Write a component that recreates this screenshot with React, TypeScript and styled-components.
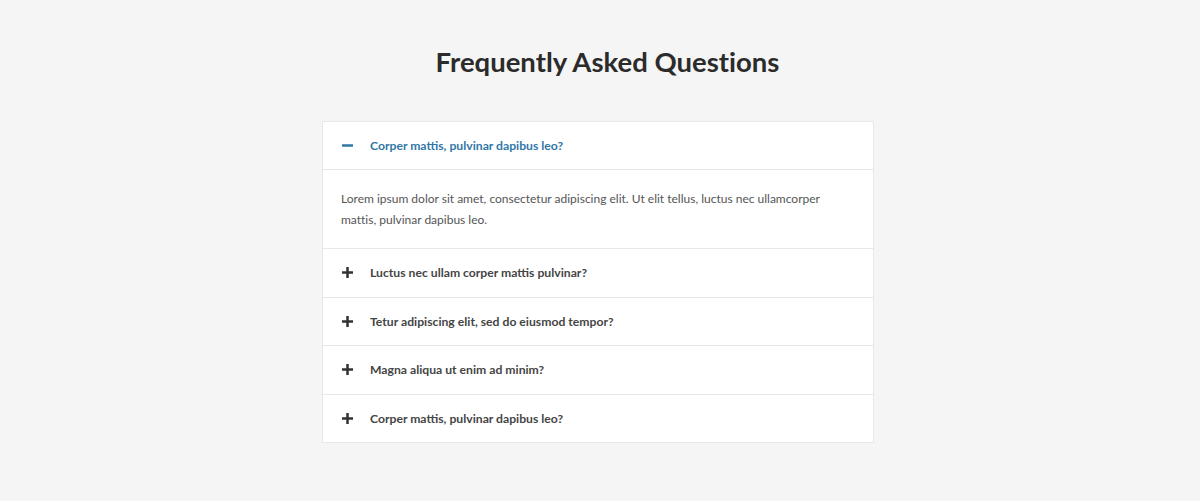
import React, { useState } from 'react';
import styled, { createGlobalStyle } from 'styled-components';

const GlobalStyle = createGlobalStyle`
  html, body {
    margin: 0;
    padding: 0;
    background: #f5f5f5;
    font-family: Lato, "Open Sans", sans-serif;
    font-variant-ligatures: none;
  }
`;

const Page = styled.div`
  display: flex;
  flex-direction: column;
  align-items: center;
  padding: 45px 4px 0 0;
  min-height: 501px;
  box-sizing: border-box;
`;

const Title = styled.h1`
  margin: 0 0 42px 19px;
  font-size: 27.5px;
  font-weight: 700;
  color: #2b2b2b;
  line-height: 34px;
`;

const Accordion = styled.div`
  width: 552px;
  background: #fff;
  border: 1px solid #e8e8e8;
  box-sizing: border-box;
`;

const Item = styled.div`
  & + & {
    border-top: 1px solid #e8e8e8;
  }
`;

const Header = styled.button<{ $open: boolean }>`
  display: flex;
  align-items: center;
  gap: 17px;
  width: 100%;
  height: ${p => (p.$open ? '48px' : '47.5px')};
  padding: 0 20px 0 18px;
  border: none;
  background: transparent;
  cursor: pointer;
  font-family: inherit;
  font-size: 12.2px;
  font-weight: 700;
  text-align: left;
  color: ${p => (p.$open ? '#2f77a8' : '#454545')};
  border-bottom: ${p => (p.$open ? '1px solid #e8e8e8' : 'none')};
`;

const Icon = styled.span`
  display: flex;
  width: 12px;
  justify-content: center;
`;

const Body = styled.div`
  padding: 18px 20px 18px 18px;
  font-size: 12px;
  line-height: 21px;
  color: #555;
`;

const PlusMinus = ({ open }: { open: boolean }) => (
  <svg width="11" height="11" viewBox="0 0 11 11">
    <rect x="0" y="4.25" width="11" height="2.5" fill={open ? '#2f77a8' : '#333'} />
    {!open && <rect x="4.25" y="0" width="2.5" height="11" fill="#333" />}
  </svg>
);

const items = [
  {
    q: 'Corper mattis, pulvinar dapibus leo?',
    a: 'Lorem ipsum dolor sit amet, consectetur adipiscing elit. Ut elit tellus, luctus nec ullamcorper mattis, pulvinar dapibus leo.',
  },
  { q: 'Luctus nec ullam corper mattis pulvinar?', a: 'Lorem ipsum dolor sit amet, consectetur adipiscing elit.' },
  { q: 'Tetur adipiscing elit, sed do eiusmod tempor?', a: 'Lorem ipsum dolor sit amet, consectetur adipiscing elit.' },
  { q: 'Magna aliqua ut enim ad minim?', a: 'Lorem ipsum dolor sit amet, consectetur adipiscing elit.' },
  { q: 'Corper mattis, pulvinar dapibus leo?', a: 'Lorem ipsum dolor sit amet, consectetur adipiscing elit.' },
];

export default function App() {
  const [open, setOpen] = useState<number | null>(0);
  return (
    <>
      <GlobalStyle />
      <Page>
        <Title>Frequently Asked Questions</Title>
        <Accordion>
          {items.map((it, i) => (
            <Item key={i}>
              <Header $open={open === i} onClick={() => setOpen(open === i ? null : i)}>
                <Icon>
                  <PlusMinus open={open === i} />
                </Icon>
                {it.q}
              </Header>
              {open === i && <Body>{it.a}</Body>}
            </Item>
          ))}
        </Accordion>
      </Page>
    </>
  );
}
